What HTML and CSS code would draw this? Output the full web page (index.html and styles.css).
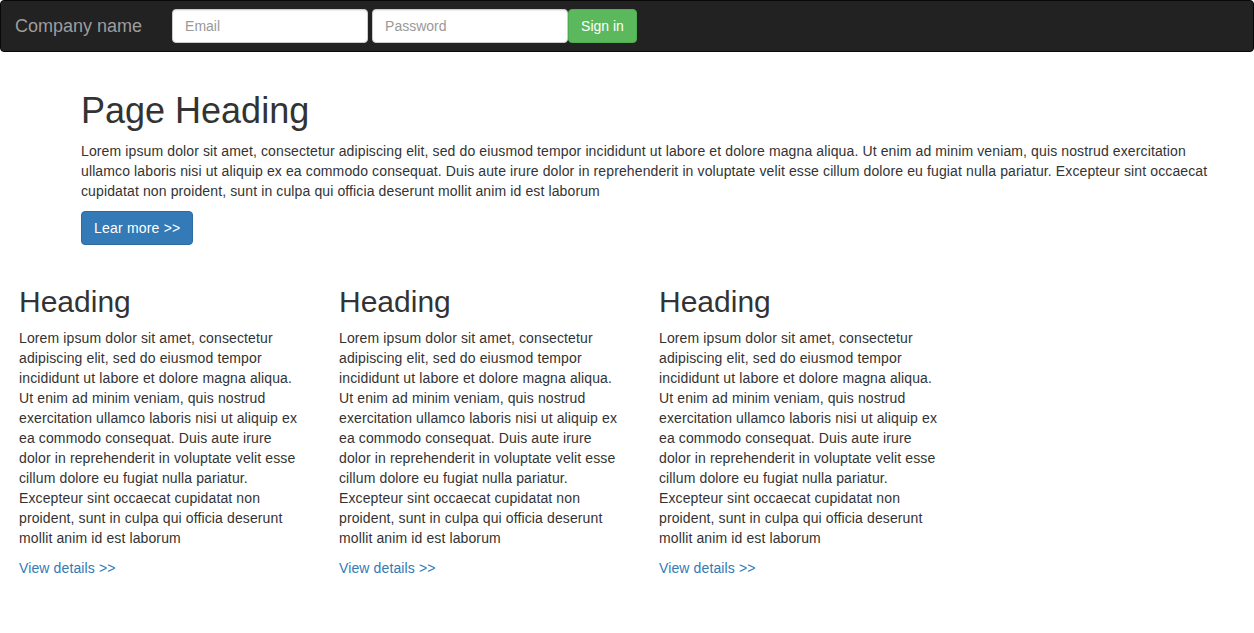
FILE: index.html
```html
<!DOCTYPE html>
<html lang="en">
<head>
<meta charset="utf-8">
<title>Company name</title>
<link rel="stylesheet" href="styles.css">
</head>
<body>
<nav class="navbar">
  <a class="brand" href="#">Company name</a>
  <form class="signin-form">
    <input class="field field-email" type="text" placeholder="Email">
    <input class="field field-password" type="password" placeholder="Password">
    <button class="btn btn-success" type="button">Sign in</button>
  </form>
</nav>

<section class="jumbotron">
  <h1 class="page-title">Page Heading</h1>
  <p class="lead-text">Lorem ipsum dolor sit amet, consectetur adipiscing elit, sed do eiusmod tempor incididunt ut labore et dolore magna aliqua. Ut enim ad minim veniam, quis nostrud exercitation ullamco laboris nisi ut aliquip ex ea commodo consequat. Duis aute irure dolor in reprehenderit in voluptate velit esse cillum dolore eu fugiat nulla pariatur. Excepteur sint occaecat cupidatat non proident, sunt in culpa qui officia deserunt mollit anim id est laborum</p>
  <div class="actions"><a class="btn btn-primary" href="#">Lear more &gt;&gt;</a></div>
</section>

<section class="features">
  <div class="feature">
    <h2 class="feature-title">Heading</h2>
    <p class="feature-text">Lorem ipsum dolor sit amet, consectetur adipiscing elit, sed do eiusmod tempor incididunt ut labore et dolore magna aliqua. Ut enim ad minim veniam, quis nostrud exercitation ullamco laboris nisi ut aliquip ex ea commodo consequat. Duis aute irure dolor in reprehenderit in voluptate velit esse cillum dolore eu fugiat nulla pariatur. Excepteur sint occaecat cupidatat non proident, sunt in culpa qui officia deserunt mollit anim id est laborum</p>
    <a class="feature-link" href="#">View details &gt;&gt;</a>
  </div>
  <div class="feature">
    <h2 class="feature-title">Heading</h2>
    <p class="feature-text">Lorem ipsum dolor sit amet, consectetur adipiscing elit, sed do eiusmod tempor incididunt ut labore et dolore magna aliqua. Ut enim ad minim veniam, quis nostrud exercitation ullamco laboris nisi ut aliquip ex ea commodo consequat. Duis aute irure dolor in reprehenderit in voluptate velit esse cillum dolore eu fugiat nulla pariatur. Excepteur sint occaecat cupidatat non proident, sunt in culpa qui officia deserunt mollit anim id est laborum</p>
    <a class="feature-link" href="#">View details &gt;&gt;</a>
  </div>
  <div class="feature">
    <h2 class="feature-title">Heading</h2>
    <p class="feature-text">Lorem ipsum dolor sit amet, consectetur adipiscing elit, sed do eiusmod tempor incididunt ut labore et dolore magna aliqua. Ut enim ad minim veniam, quis nostrud exercitation ullamco laboris nisi ut aliquip ex ea commodo consequat. Duis aute irure dolor in reprehenderit in voluptate velit esse cillum dolore eu fugiat nulla pariatur. Excepteur sint occaecat cupidatat non proident, sunt in culpa qui officia deserunt mollit anim id est laborum</p>
    <a class="feature-link" href="#">View details &gt;&gt;</a>
  </div>
</section>
</body>
</html>
```

FILE: styles.css
```css
* {
  box-sizing: border-box;
}

body {
  margin: 0;
  font-family: "Liberation Sans", Arial, Helvetica, sans-serif;
  font-size: 14px;
  line-height: 20px;
  color: #333;
  background: #fff;
}

.navbar {
  display: flex;
  align-items: center;
  height: 52px;
  background: #222;
  border: 1px solid #080808;
  border-radius: 4px;
}

.brand {
  padding: 0 15px 0 14px;
  font-size: 18px;
  line-height: 50px;
  color: #9d9d9d;
  text-decoration: none;
}

.signin-form {
  display: flex;
  margin: 0 0 0 15px;
}

.field {
  width: 196px;
  height: 34px;
  padding: 6px 12px;
  border: 1px solid #ccc;
  border-radius: 4px;
  background: #fff;
  font-family: "Liberation Sans", Arial, sans-serif;
  font-size: 14px;
  color: #555;
  box-shadow: inset 0 1px 1px rgba(0, 0, 0, .075);
}

.field::placeholder {
  color: #999;
}

.field-email {
  margin-right: 4px;
}

.btn {
  display: inline-block;
  height: 34px;
  padding: 6px 12px;
  border: 1px solid transparent;
  border-radius: 4px;
  font-family: "Liberation Sans", Arial, sans-serif;
  font-size: 14px;
  line-height: 20px;
  color: #fff;
  text-decoration: none;
  cursor: pointer;
}

.btn-success {
  background: #5cb85c;
  border-color: #4cae4c;
}

.btn-primary {
  background: #337ab7;
  border-color: #2e6da4;
  letter-spacing: 0.2px;
}

.jumbotron {
  padding: 39px 30px 0 81px;
}

.page-title {
  margin: 0 0 10px;
  font-size: 36px;
  font-weight: 500;
  line-height: 39.6px;
  color: #333;
}

.lead-text {
  margin: 0 0 10px;
  letter-spacing: 0.12px;
}

.actions {
  display: flex;
}

.features {
  display: grid;
  grid-template-columns: repeat(3, 282px);
  column-gap: 38px;
  padding: 0 0 0 19px;
  margin-top: 40px;
}

.feature-title {
  margin: 0 0 10px;
  font-size: 30px;
  font-weight: 500;
  line-height: 33px;
  color: #333;
}

.feature-text {
  margin: 0 0 10px;
  letter-spacing: 0.12px;
}

.feature-link {
  color: #337ab7;
  text-decoration: none;
  letter-spacing: 0.12px;
}
```
